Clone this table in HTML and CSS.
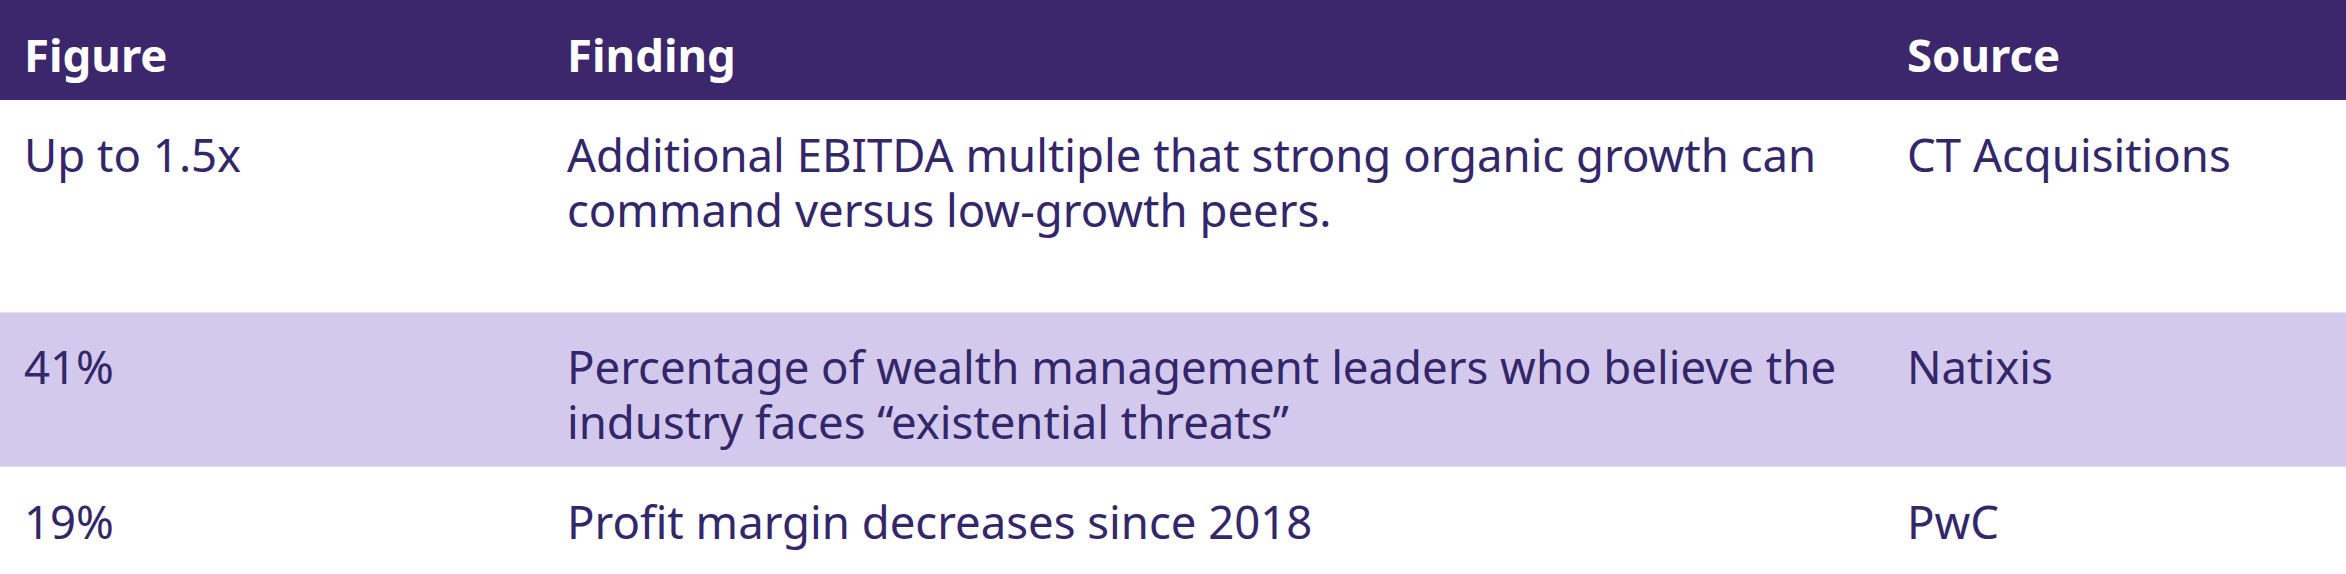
FILE: index.html
```html
<!DOCTYPE html>
<html lang="en">
<head>
<meta charset="utf-8">
<title>Findings</title>
<link rel="stylesheet" href="styles.css">
</head>
<body>
<table class="findings">
  <colgroup>
    <col class="col-figure">
    <col class="col-finding">
    <col class="col-source">
  </colgroup>
  <thead>
    <tr class="head-row">
      <th>Figure</th>
      <th>Finding</th>
      <th>Source</th>
    </tr>
  </thead>
  <tbody>
    <tr class="row row-tall">
      <td>Up to 1.5x</td>
      <td>Additional EBITDA multiple that strong organic growth can command versus low-growth peers.</td>
      <td>CT Acquisitions</td>
    </tr>
    <tr class="row row-shaded">
      <td>41%</td>
      <td>Percentage of wealth management leaders who believe the industry faces “existential threats”</td>
      <td>Natixis</td>
    </tr>
    <tr class="row">
      <td>19%</td>
      <td>Profit margin decreases since 2018</td>
      <td>PwC</td>
    </tr>
  </tbody>
</table>
</body>
</html>
```

FILE: styles.css
```css
html, body {
  margin: 0;
  padding: 0;
  background: #ffffff;
}

body {
  font-family: "Noto Sans", "Open Sans", sans-serif;
  font-size: 45.5px;
  line-height: 55px;
  color: #34266a;
}

.findings {
  width: 2346px;
  border-collapse: collapse;
  table-layout: fixed;
}

.col-figure { width: 543px; }
.col-finding { width: 1340px; }
.col-source { width: 463px; }

.findings th,
.findings td {
  text-align: left;
  vertical-align: top;
  padding: 27px 12px 18px 24px;
}

.head-row {
  background: #3c276c;
}

.head-row th {
  color: #ffffff;
  font-weight: 700;
}

.row-tall td {
  padding-bottom: 75px;
}

.row-shaded {
  background: #d3c9ec;
}

.row-shaded td {
  border-top: 1px solid #e3ddf3;
  border-bottom: 1px solid #e3ddf3;
  padding-top: 26px;
  padding-bottom: 17px;
}
```
